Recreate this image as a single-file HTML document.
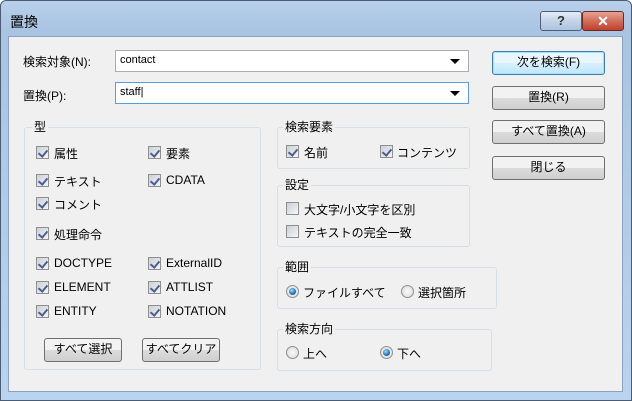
<!DOCTYPE html>
<html><head><meta charset="utf-8"><style>
*{margin:0;padding:0;box-sizing:border-box}
body{width:632px;height:401px;overflow:hidden;background:#fff;font-family:"Liberation Sans","Noto Sans CJK JP",sans-serif;font-size:12px;color:#000;position:relative}
.frame{position:absolute;left:0;top:0;width:632px;height:401px;background:linear-gradient(#b8d0ea,#a9c4e2 30px,#bad3ee);border:1px solid #4a5d74;border-radius:6px 6px 0 0}
.client{position:absolute;left:8px;top:36px;width:615px;height:356px;background:#f0f0f0;border:1px solid #8ba3bf}
.a{position:absolute;white-space:nowrap}
.inp{position:absolute;left:115px;width:354px;height:22px;background:#fff;border:1px solid #abadb3;padding:3px 4px;font-size:11px}
.inp:after{content:"";position:absolute;right:8px;top:8px;border-left:5px solid transparent;border-right:5px solid transparent;border-top:5px solid #000}
.btn{position:absolute;height:24px;border:1px solid #707070;border-radius:3px;background:linear-gradient(#f2f2f2 50%,#dcdcdc 50%,#cfcfcf);text-align:center;line-height:21px;font-size:12px}
.grp{position:absolute;border:1px solid #d5dfe5;border-radius:3px}
.gl{position:absolute;background:#f0f0f0;padding:0 2px;font-size:12px;line-height:14px}
.cb{position:absolute;width:13px;height:13px;border:1px solid #8e8f8f;background:linear-gradient(135deg,#cbcfd5,#f6f6f6)}
.cb.c:after{content:"";position:absolute;left:3px;top:1px;width:4px;height:7px;border:solid #4a5f97;border-width:0 2px 2px 0;transform:rotate(40deg)}
.rb{position:absolute;width:13px;height:13px;border:1px solid #8e8f8f;border-radius:50%;background:radial-gradient(#fafafa,#d8d8d8)}
.rb.c:after{content:"";position:absolute;left:2px;top:2px;width:7px;height:7px;border-radius:50%;background:radial-gradient(circle at 40% 35%,#9fe0ff,#1a6fb5 60%,#0b3e6e)}
</style></head><body>
<div class="frame"></div>
<div class="a" style="left:10px;top:12px;font-size:14px">置換</div>
<div class="a" style="left:540px;top:11px;width:42px;height:20px;border:1px solid #4c5f7a;border-radius:3px;background:linear-gradient(#e3ecf6,#c3d3e8 50%,#aec3df);text-align:center;font-weight:bold;color:#333;font-size:13px;line-height:18px">?</div>
<div class="a" style="left:582px;top:11px;width:42px;height:20px;border:1px solid #6b2a22;border-radius:3px;background:linear-gradient(#e6a292,#d26e5b 50%,#c0412b);text-align:center;font-weight:bold;color:#fff;font-size:14px;line-height:18px">✕</div>
<div class="client"></div>

<div class="a" style="left:23px;top:53px">検索対象(N):</div>
<div class="inp" style="top:50px">contact</div>
<div class="a" style="left:23px;top:87px">置換(P):</div>
<div class="inp" style="top:82px;border-color:#569de5">staff|</div>

<div class="btn" style="left:492px;top:51px;width:113px;border-color:#3c7fb1;box-shadow:inset 0 0 0 1px #a6e0f8;background:linear-gradient(#eaf6fd 50%,#d9f0fc 50%,#bee6fd)">次を検索(F)</div>
<div class="btn" style="left:492px;top:86px;width:113px">置換(R)</div>
<div class="btn" style="left:492px;top:120px;width:113px">すべて置換(A)</div>
<div class="btn" style="left:492px;top:156px;width:113px">閉じる</div>

<div class="grp" style="left:24px;top:127px;width:237px;height:243px"></div>
<div class="gl" style="left:32px;top:120px">型</div>
<div class="cb c" style="left:36px;top:146px"></div><div class="a" style="left:54px;top:145px">属性</div>
<div class="cb c" style="left:148px;top:146px"></div><div class="a" style="left:166px;top:145px">要素</div>
<div class="cb c" style="left:36px;top:174px"></div><div class="a" style="left:54px;top:173px">テキスト</div>
<div class="cb c" style="left:148px;top:174px"></div><div class="a" style="left:166px;top:173px">CDATA</div>
<div class="cb c" style="left:36px;top:197px"></div><div class="a" style="left:54px;top:196px">コメント</div>
<div class="cb c" style="left:36px;top:227px"></div><div class="a" style="left:54px;top:226px">処理命令</div>
<div class="cb c" style="left:36px;top:257px"></div><div class="a" style="left:54px;top:256px">DOCTYPE</div>
<div class="cb c" style="left:148px;top:257px"></div><div class="a" style="left:166px;top:256px">ExternalID</div>
<div class="cb c" style="left:36px;top:281px"></div><div class="a" style="left:54px;top:280px">ELEMENT</div>
<div class="cb c" style="left:148px;top:281px"></div><div class="a" style="left:166px;top:280px">ATTLIST</div>
<div class="cb c" style="left:36px;top:305px"></div><div class="a" style="left:54px;top:304px">ENTITY</div>
<div class="cb c" style="left:148px;top:305px"></div><div class="a" style="left:166px;top:304px">NOTATION</div>
<div class="btn" style="left:44px;top:338px;width:78px">すべて選択</div>
<div class="btn" style="left:142px;top:338px;width:78px">すべてクリア</div>

<div class="grp" style="left:277px;top:127px;width:193px;height:42px"></div>
<div class="gl" style="left:283px;top:120px">検索要素</div>
<div class="cb c" style="left:286px;top:145px"></div><div class="a" style="left:304px;top:144px">名前</div>
<div class="cb c" style="left:380px;top:145px"></div><div class="a" style="left:397px;top:144px">コンテンツ</div>

<div class="grp" style="left:277px;top:185px;width:193px;height:62px"></div>
<div class="gl" style="left:283px;top:178px">設定</div>
<div class="cb" style="left:286px;top:202px"></div><div class="a" style="left:304px;top:201px">大文字/小文字を区別</div>
<div class="cb" style="left:286px;top:225px"></div><div class="a" style="left:304px;top:224px">テキストの完全一致</div>

<div class="grp" style="left:277px;top:267px;width:220px;height:42px"></div>
<div class="gl" style="left:283px;top:260px">範囲</div>
<div class="rb c" style="left:286px;top:285px"></div><div class="a" style="left:303px;top:284px">ファイルすべて</div>
<div class="rb" style="left:401px;top:285px"></div><div class="a" style="left:418px;top:284px">選択箇所</div>

<div class="grp" style="left:277px;top:329px;width:215px;height:42px"></div>
<div class="gl" style="left:283px;top:322px">検索方向</div>
<div class="rb" style="left:286px;top:346px"></div><div class="a" style="left:303px;top:345px">上へ</div>
<div class="rb c" style="left:380px;top:346px"></div><div class="a" style="left:397px;top:345px">下へ</div>
</body></html>
